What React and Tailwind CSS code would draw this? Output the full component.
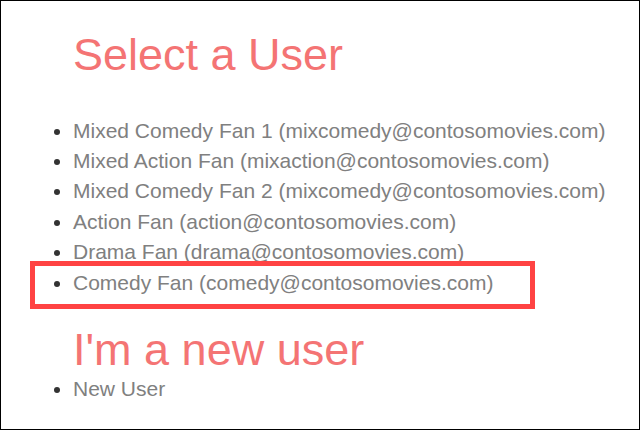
import React from 'react';

const users = [
  { name: 'Mixed Comedy Fan 1', email: 'mixcomedy@contosomovies.com' },
  { name: 'Mixed Action Fan', email: 'mixaction@contosomovies.com' },
  { name: 'Mixed Comedy Fan 2', email: 'mixcomedy@contosomovies.com' },
  { name: 'Action Fan', email: 'action@contosomovies.com' },
  { name: 'Drama Fan', email: 'drama@contosomovies.com' },
  { name: 'Comedy Fan', email: 'comedy@contosomovies.com', highlighted: true },
];

const App = () => (
  <div className="relative w-[640px] h-[430px] overflow-hidden bg-white border border-black font-['Liberation_Sans',Arial,sans-serif]">
    <div className="pl-[72px] pt-[29px]">
      <h1 className="text-[45px] leading-[1.1] text-[#f47474]">Select a User</h1>
      <ul className="mt-[36px] list-disc marker:text-[#333] text-[21px] leading-[30.4px]">
        {users.map((u) => (
          <li key={u.name + u.email} className="relative">
            <span className="text-[#808080]">{u.name} ({u.email})</span>
            {u.highlighted && (
              <div className="absolute left-[-43px] top-[-7px] w-[505px] h-[48px] border-[5px] border-[#ff4343]" />
            )}
          </li>
        ))}
      </ul>
      <h2 className="mt-[27px] text-[45px] leading-[1.1] text-[#f47474]">I'm a new user</h2>
      <ul className="list-disc marker:text-[#333] text-[21px] leading-[30.4px]">
        <li>
          <span className="text-[#808080]">New User</span>
        </li>
      </ul>
    </div>
  </div>
);

export default App;
